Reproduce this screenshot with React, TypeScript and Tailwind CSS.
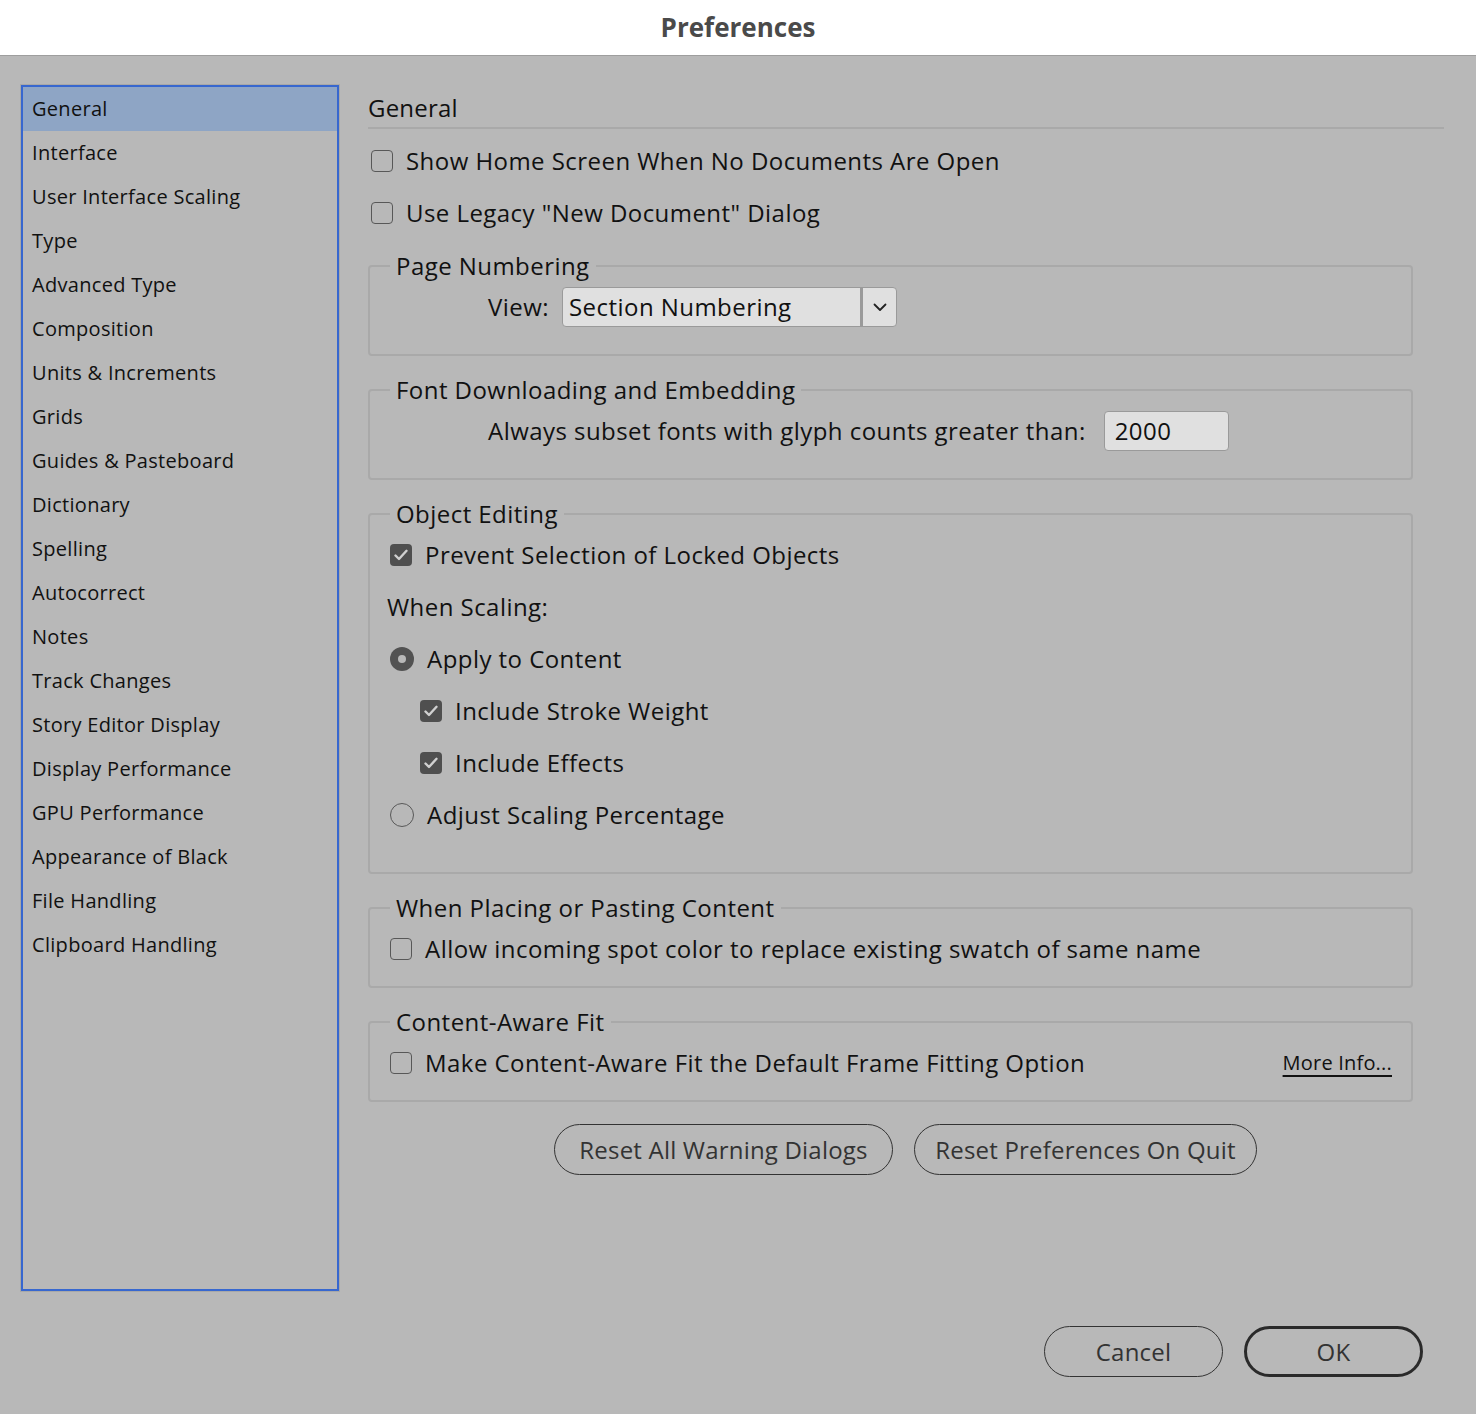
import type { ReactNode } from "react";

const font = { fontFamily: '"Open Sans", "Noto Sans", sans-serif' };

const sections = [
    "General",
    "Interface",
    "User Interface Scaling",
    "Type",
    "Advanced Type",
    "Composition",
    "Units & Increments",
    "Grids",
    "Guides & Pasteboard",
    "Dictionary",
    "Spelling",
    "Autocorrect",
    "Notes",
    "Track Changes",
    "Story Editor Display",
    "Display Performance",
    "GPU Performance",
    "Appearance of Black",
    "File Handling",
    "Clipboard Handling",
];

function Checkbox({ checked }: { checked?: boolean }) {
    if (checked) {
        return (
            <span className="flex h-[22px] w-[22px] shrink-0 items-center justify-center rounded-[4px] bg-[#4f4f4f]">
                <svg width="14" height="12" viewBox="0 0 14 12" fill="none">
                    <path d="M1.5 6.5 L5 10 L12.5 1.8" stroke="#d0d0d0" strokeWidth="2.4" strokeLinecap="round" strokeLinejoin="round" />
                </svg>
            </span>
        );
    }
    return <span className="h-[22px] w-[22px] shrink-0 rounded-[4px] border-[1.5px] border-[#585858]" />;
}

function Radio({ checked }: { checked?: boolean }) {
    if (checked) {
        return (
            <span className="flex h-[24px] w-[24px] shrink-0 items-center justify-center rounded-full bg-[#525252]">
                <span className="h-[8px] w-[8px] rounded-full bg-[#b8b8b8]" />
            </span>
        );
    }
    return <span className="h-[24px] w-[24px] shrink-0 rounded-full border-[1.5px] border-[#585858]" />;
}

function Group({ title, children, className }: { title: string; children: ReactNode; className: string }) {
    return (
        <fieldset className="rounded-[4px] border-2 border-[#a9a9a9]">
            <legend className="ml-[20px] px-[6px] text-[24px] leading-[30px] text-[#111]">{title}</legend>
            <div className={className}>{children}</div>
        </fieldset>
    );
}

function PillButton({ label, strong, className }: { label: string; strong?: boolean; className: string }) {
    return (
        <button
            className={`flex h-[51px] items-center justify-center rounded-full text-[24px] tracking-[0.2px] text-[#333] ${
                strong ? "border-[3px] border-[#2a2a2a]" : "border-[1.5px] border-[#333]"
            } ${className}`}
        >
            {label}
        </button>
    );
}

export default function App() {
    return (
        <div className="flex h-[1414px] w-full flex-col bg-[#b8b8b8] text-[#111]" style={font}>
            <div className="flex h-[56px] shrink-0 items-center justify-center border-b border-[#9e9e9e] bg-white">
                <p className="text-[26px] font-bold text-[#4a4a4a]">Preferences</p>
            </div>

            <div className="flex pl-[20px] pt-[28px]">
                <div className="h-[1208px] w-[320px] shrink-0 border border-[#a8a8a8]">
                    <div className="h-full w-full border-2 border-[#3767cf]">
                        {sections.map((s, i) => (
                            <div
                                key={s}
                                className={`flex h-[44px] items-center pl-[9px] text-[20px] tracking-[0.3px] ${i === 0 ? "bg-[#8ea5c5]" : ""}`}
                            >
                                {s}
                            </div>
                        ))}
                    </div>
                </div>

                <div className="ml-[28px] flex-1 pr-[32px] text-[24px] tracking-[0.45px]">
                    <div className="border-b-2 border-[#a9a9a9] pb-[3px] pt-[8px]">
                        <p className="leading-[32px] tracking-[0.2px]">General</p>
                    </div>
                    <div className="mt-[6px] flex h-[52px] items-center gap-[13px] pl-[3px]">
                        <Checkbox />
                        <span>Show Home Screen When No Documents Are Open</span>
                    </div>
                    <div className="flex h-[52px] items-center gap-[13px] pl-[3px]">
                        <Checkbox />
                        <span>Use Legacy "New Document" Dialog</span>
                    </div>

                    <div className="mr-[31px] mt-[12px] flex flex-col gap-[19px]">
                        <Group title="Page Numbering" className="pb-[27px]">
                            <div className="mt-[6px] flex items-center pl-[118px]">
                                <span>View:</span>
                                <div className="ml-[13px] flex h-[40px] w-[335px] items-center rounded-[4px] border-[1.5px] border-[#9a9a9a] bg-[#e0e0e0]">
                                    <span className="flex-1 pl-[6px]">Section Numbering</span>
                                    <span className="flex h-full w-[36px] items-center justify-center border-l-[3px] border-[#9a9a9a]">
                                        <svg width="14" height="9" viewBox="0 0 14 9" fill="none">
                                            <path d="M1.5 1.5 L7 7 L12.5 1.5" stroke="#222" strokeWidth="1.8" strokeLinecap="round" strokeLinejoin="round" />
                                        </svg>
                                    </span>
                                </div>
                            </div>
                        </Group>

                        <Group title="Font Downloading and Embedding" className="pb-[27px]">
                            <div className="mt-[6px] flex items-center pl-[118px]">
                                <span>Always subset fonts with glyph counts greater than:</span>
                                <div className="ml-[18px] flex h-[40px] w-[125px] items-center rounded-[4px] border-[1.5px] border-[#9a9a9a] bg-[#e0e0e0] pl-[10px]">
                                    2000
                                </div>
                            </div>
                        </Group>

                        <Group title="Object Editing" className="pb-[31px] pl-[20px]">
                            <div className="flex h-[52px] items-center gap-[13px]">
                                <Checkbox checked />
                                <span>Prevent Selection of Locked Objects</span>
                            </div>
                            <div className="-ml-[3px] flex h-[52px] items-center">When Scaling:</div>
                            <div className="flex h-[52px] items-center gap-[13px]">
                                <Radio checked />
                                <span>Apply to Content</span>
                            </div>
                            <div className="flex h-[52px] items-center gap-[13px] pl-[30px]">
                                <Checkbox checked />
                                <span>Include Stroke Weight</span>
                            </div>
                            <div className="flex h-[52px] items-center gap-[13px] pl-[30px]">
                                <Checkbox checked />
                                <span>Include Effects</span>
                            </div>
                            <div className="flex h-[52px] items-center gap-[13px]">
                                <Radio />
                                <span>Adjust Scaling Percentage</span>
                            </div>
                        </Group>

                        <Group title="When Placing or Pasting Content" className="pb-[11px] pl-[20px]">
                            <div className="flex h-[52px] items-center gap-[13px]">
                                <Checkbox />
                                <span>Allow incoming spot color to replace existing swatch of same name</span>
                            </div>
                        </Group>

                        <Group title="Content-Aware Fit" className="pb-[11px] pl-[20px] pr-[19px]">
                            <div className="flex h-[52px] items-center gap-[13px]">
                                <Checkbox />
                                <span className="flex-1">Make Content-Aware Fit the Default Frame Fitting Option</span>
                                <span className="text-[20px] tracking-[0.2px] underline decoration-2 underline-offset-[5px]">More Info...</span>
                            </div>
                        </Group>

                        <div className="mt-[3px] flex gap-[21px] pl-[186px]">
                            <PillButton label="Reset All Warning Dialogs" className="w-[339px]" />
                            <PillButton label="Reset Preferences On Quit" className="w-[343px]" />
                        </div>
                    </div>
                </div>
            </div>

            <div className="mt-[34px] flex justify-end gap-[21px] pr-[53px]">
                <PillButton label="Cancel" className="w-[179px]" />
                <PillButton label="OK" strong className="w-[179px]" />
            </div>
        </div>
    );
}
